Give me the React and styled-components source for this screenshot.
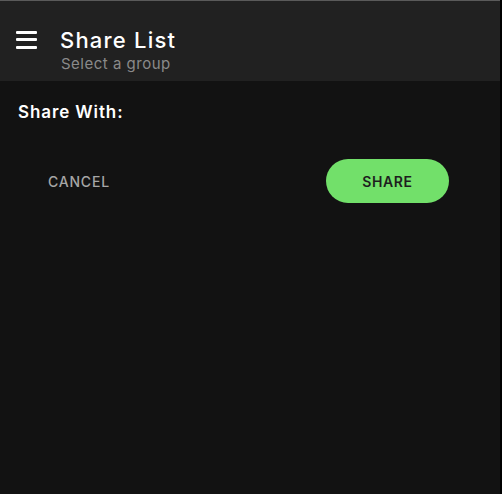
import styled, { createGlobalStyle } from "styled-components"

const GlobalStyle = createGlobalStyle`
    html, body {
        margin: 0;
        padding: 0;
        background: #000;
    }
    #root {
        min-height: 100vh;
    }
`

const App = () => {
    return <>
        <GlobalStyle />
        <Screen>
            {/* header */}
            <Header>
                <MenuButton aria-label="menu">
                    <Bar />
                    <Bar />
                    <Bar />
                </MenuButton>
                <TitleBlock>
                    <Title>Share List</Title>
                    <Subtitle>Select a group</Subtitle>
                </TitleBlock>
            </Header>

            {/* body */}
            <Body>
                <Label>Share With:</Label>
                <Actions>
                    <TextButton>Cancel</TextButton>
                    <PillButton>Share</PillButton>
                </Actions>
            </Body>
        </Screen>
    </>
}

export default App


const Screen = styled.div`
    width: 500px;
    min-height: 100vh;
    background: #121212;
    font-family: Inter, "Open Sans", sans-serif;
    display: flex;
    flex-direction: column;
`
const Header = styled.header`
    height: 80px;
    border-top: 1px solid #5a5a5a;
    background: #212121;
    display: flex;
    align-items: center;
    padding: 0 16px;
    gap: 23px;
`
const MenuButton = styled.div`
    width: 21px;
    height: 18px;
    display: flex;
    flex-direction: column;
    justify-content: space-between;
    margin-top: -3px;
`
const Bar = styled.span`
    display: block;
    height: 3px;
    border-radius: 1px;
    background: #fff;
`
const TitleBlock = styled.div`
    display: flex;
    flex-direction: column;
    margin-top: 19px;
`
const Title = styled.div`
    color: #fff;
    font-size: 22px;
    font-weight: 500;
    line-height: 26px;
    letter-spacing: 1.2px;
`
const Subtitle = styled.div`
    color: #8a8a8a;
    font-size: 15px;
    line-height: 20px;
    letter-spacing: 0.5px;
    margin: 1px 0 0 1px;
`
const Body = styled.main`
    padding: 19px 18px;
    display: flex;
    flex-direction: column;
`
const Label = styled.div`
    color: #fff;
    font-size: 17px;
    font-weight: 600;
    line-height: 24px;
    letter-spacing: 0.9px;
`
const Actions = styled.div`
    display: flex;
    justify-content: space-between;
    align-items: center;
    margin-top: 35px;
    padding: 0 33px 0 30px;
`
const TextButton = styled.button`
    background: none;
    border: none;
    padding: 0;
    color: #a6a6a6;
    font-family: inherit;
    font-size: 14px;
    font-weight: 500;
    text-transform: uppercase;
    letter-spacing: 0.8px;
`
const PillButton = styled.button`
    width: 123px;
    height: 44px;
    border: none;
    border-radius: 22px;
    background: #72e06a;
    color: #1e1e1e;
    font-family: inherit;
    font-size: 14px;
    font-weight: 600;
    text-transform: uppercase;
    letter-spacing: 0.6px;
`
